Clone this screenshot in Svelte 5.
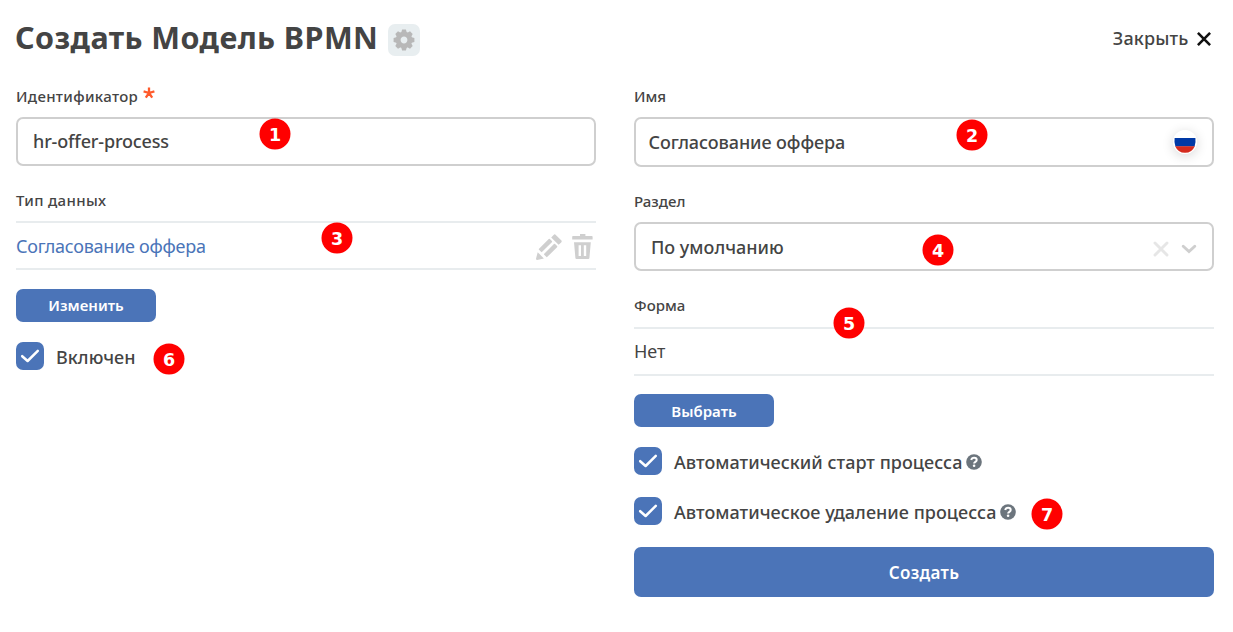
<script>
  const markers = [
    { n: 1, x: 275, y: 134 },
    { n: 2, x: 972, y: 135 },
    { n: 3, x: 337, y: 238 },
    { n: 4, x: 938, y: 250 },
    { n: 5, x: 849, y: 323 },
    { n: 6, x: 169, y: 359 },
    { n: 7, x: 1047, y: 514 }
  ];
</script>

{#snippet check(text, help)}
  <div class="check">
    <span class="box">
      <svg width="28" height="28" viewBox="0 0 28 28"><path d="M6.2 14.2 L11.6 19 L21.8 8.8" fill="none" stroke="#fff" stroke-width="2.5" stroke-linecap="round" stroke-linejoin="round" /></svg>
    </span>
    <span class="t">{text}</span>
    {#if help}
      <svg class="help" width="16" height="16" viewBox="0 0 16 16">
        <circle cx="8" cy="8" r="7.8" fill="#6c757d" />
        <path d="M5.2 6 C5.6 4.5 6.7 3.8 8.1 3.8 C9.6 3.8 10.7 4.7 10.7 6 C10.7 7.8 8.1 7.8 8.1 9.5" fill="none" stroke="#fff" stroke-width="2" />
        <circle cx="8.1" cy="11.8" r="1.3" fill="#fff" />
      </svg>
    {/if}
  </div>
{/snippet}

<div class="page">
  <header>
    <h1>Создать Модель BPMN</h1>
    <span class="gear">
      <svg width="22" height="22" viewBox="-11 -11 22 22" fill="#b8b8b8">
        {#each [0, 45, 90, 135, 180, 225, 270, 315] as a}
          <path d="M-3.2 -6 L-1.9 -10.4 H1.9 L3.2 -6 Z" transform="rotate({a})" />
        {/each}
        <circle r="5.8" fill="none" stroke="#b8b8b8" stroke-width="4.8" />
      </svg>
    </span>
    <div class="close">
      <span>Закрыть</span>
      <svg width="14" height="14" viewBox="0 0 14 14"><path d="M.9 .9 L13.1 13.1 M13.1 .9 L.9 13.1" stroke="#111" stroke-width="2.6" /></svg>
    </div>
  </header>

  <main>
    <section>
      <div class="label wide"><span>Идентификатор</span>
        <svg class="star" width="12" height="12" viewBox="-6 -6 12 12"><path d="M0 0 V-5.4 M0 0 L5.4 -1.6 M0 0 L3.2 4.6 M0 0 L-3.2 4.6 M0 0 L-5.4 -1.6" stroke="#ff5a2b" stroke-width="2.3" /></svg>
      </div>
      <div class="input id">hr-offer-process</div>
      <div class="label second wide">Тип данных</div>
      <div class="row">
        <span class="link">Согласование оффера</span>
        <svg class="pencil" width="26" height="26" viewBox="0 0 26 26" fill="#cfcfcf">
          <path d="M17.6 .9 Q18.7 -.2 19.8 .9 L25.2 6.2 Q26.3 7.3 25.2 8.4 L22.6 10.8 L15.2 3.4 Z" />
          <path d="M13.3 5.6 L15.3 7.6 L5.6 17.3 L3.6 15.3 Z M18.5 10.6 L20.5 12.6 L10.8 22.3 L8.8 20.3 Z" stroke="#cfcfcf" stroke-width="1.6" stroke-linejoin="round" />
          <path d="M1.7 18.2 L7.9 24.4 L1.2 26 Q0 26 0 24.8 Z" />
        </svg>
        <svg class="trash" width="22" height="26" viewBox="0 0 22 26" fill="#cfcfcf">
          <path d="M8 0 H13.4 V2 H19.8 Q20.6 2 20.6 2.8 V5.6 H.2 V2.8 Q.2 2 1 2 H8 Z" />
          <path fill-rule="evenodd" d="M2 8.2 H18.8 L17.4 24 Q17.3 25 16.3 25 H4.5 Q3.5 25 3.4 24 Z M6.6 11.2 V22 H9 V11.2 Z M11.8 11.2 V22 H14.2 V11.2 Z" />
        </svg>
      </div>
      <button class="change">Изменить</button>
      {@render check('Включен', false)}
    </section>

    <section>
      <div class="label">Имя</div>
      <div class="input name">
        <span>Согласование оффера</span>
        <svg class="flag" width="24" height="24" viewBox="0 0 24 24">
          <circle cx="12" cy="12" r="12" fill="#fff" />
          <path d="M1.6 8 H22.4 Q23 12.3 21.6 16.4 H2.4 Q1 12.3 1.6 8 Z" fill="#0039a6" />
          <path d="M2.2 16.2 H21.8 Q19 22.8 12 22.8 Q5 22.8 2.2 16.2 Z" fill="#d52b1e" />
        </svg>
      </div>
      <div class="label second">Раздел</div>
      <div class="input select">
        <span>По умолчанию</span>
        <svg width="16" height="16" viewBox="0 0 16 16"><path d="M2 2 L14 14 M14 2 L2 14" stroke="#e6e6e6" stroke-width="2.9" stroke-linecap="round" /></svg>
        <svg class="chev" width="16" height="10" viewBox="0 0 16 10"><path d="M2.2 2.2 L8 7.6 L13.8 2.2" fill="none" stroke="#cfcfcf" stroke-width="2.9" stroke-linecap="round" /></svg>
      </div>
      <div class="label third">Форма</div>
      <div class="row none"><span>Нет</span></div>
      <button class="pick">Выбрать</button>
      {@render check('Автоматический старт процесса', true)}
      {@render check('Автоматическое удаление процесса', true)}
      <button class="submit">Создать</button>
    </section>
  </main>

  {#each markers as m}
    <span class="marker" style="left:{m.x}px;top:{m.y}px">{m.n}</span>
  {/each}
</div>

<style>
  :global(body) { background: #fff; }
  .page {
    position: relative;
    box-sizing: border-box;
    width: 1233px;
    height: 632px;
    overflow: hidden;
    padding: 16px 19px 0 16px;
    font-family: "Noto Sans", sans-serif;
    font-size: 18px;
    font-weight: 500;
    color: #444;
  }
  svg { display: block; flex: none; }
  header { display: flex; height: 68px; align-items: flex-start; }
  h1 { width: 363px; margin: 0 0 0 -1px; font-size: 30.5px; line-height: 43px; font-weight: 700; letter-spacing: 0.42px; white-space: nowrap; }
  .gear {
    display: flex; align-items: center; justify-content: center;
    width: 32px; height: 32px; margin: 8px 0 0 10px;
    border-radius: 7px; background: #e8eef0;
  }
  .close { margin-left: auto; display: flex; align-items: center; gap: 8.5px; height: 44px; padding-right: 3px; letter-spacing: 0.15px; }
  .close svg { margin-top: 1px; }
  main { display: grid; grid-template-columns: 580px 580px; gap: 38px; }
  .label { display: flex; align-items: center; height: 24px; margin-bottom: 9px; font-size: 15px; white-space: nowrap; }
  .wide { letter-spacing: 0.33px; }
  .star { margin: -6px 0 0 4.5px; }
  .input {
    box-sizing: border-box; display: flex; align-items: center;
    height: 49px; border: 2px solid #cfcfcf; border-radius: 7px; padding: 0 15px;
  }
  .input.id { padding-bottom: 2px; letter-spacing: -0.15px; }
  .input.name { height: 50px; padding: 0 15px 0 12.5px; justify-content: space-between; letter-spacing: -0.08px; }
  .flag { border-radius: 50%; box-shadow: 0 2px 12px rgba(0, 0, 0, 0.16); }
  .second { margin-top: 22px; }
  .third { margin: 22px 0 10px; }
  .select span { flex: 1; }
  .select svg { margin-top: 4px; }
  .select .chev { margin-left: 12px; }
  .row {
    box-sizing: border-box; display: flex; align-items: center; height: 49px;
    border-top: 2px solid #e8ecee; border-bottom: 2px solid #e8ecee; font-weight: 400;
  }
  .row span { flex: 1; }
  .none { padding-bottom: 2px; }
  .link { color: #4a74b8; letter-spacing: -0.26px; }
  .pencil { margin-top: 2px; }
  .trash { margin: 3px 2px 0 10px; }
  button {
    display: block; width: 140px; height: 33px; margin: 19px 0 20px; padding: 0;
    border: 0; border-radius: 7px; background: #4b74b8; color: #fff;
    font: 600 15px "Noto Sans", sans-serif;
  }
  .change { padding-bottom: 2px; }
  .pick { margin-top: 18px; }
  .submit { width: 580px; height: 50px; margin: 0; font-size: 17px; letter-spacing: 0.3px; }
  .check { display: flex; align-items: center; height: 28px; margin-bottom: 22px; white-space: nowrap; }
  .box { width: 28px; height: 28px; border-radius: 7px; background: #4b74b8; }
  .t { margin: 2px 0 0 12px; letter-spacing: 0.03px; }
  .help { margin: 2px 0 0 4px; }
  .marker {
    position: absolute; width: 31px; height: 31px; margin: -16px 0 0 -16px;
    transform: translate(0.5px, 0.5px);
    border-radius: 50%; background: #f00; color: #fff;
    font: 700 17.5px/32px "DejaVu Sans", sans-serif; text-align: center;
  }
</style>
